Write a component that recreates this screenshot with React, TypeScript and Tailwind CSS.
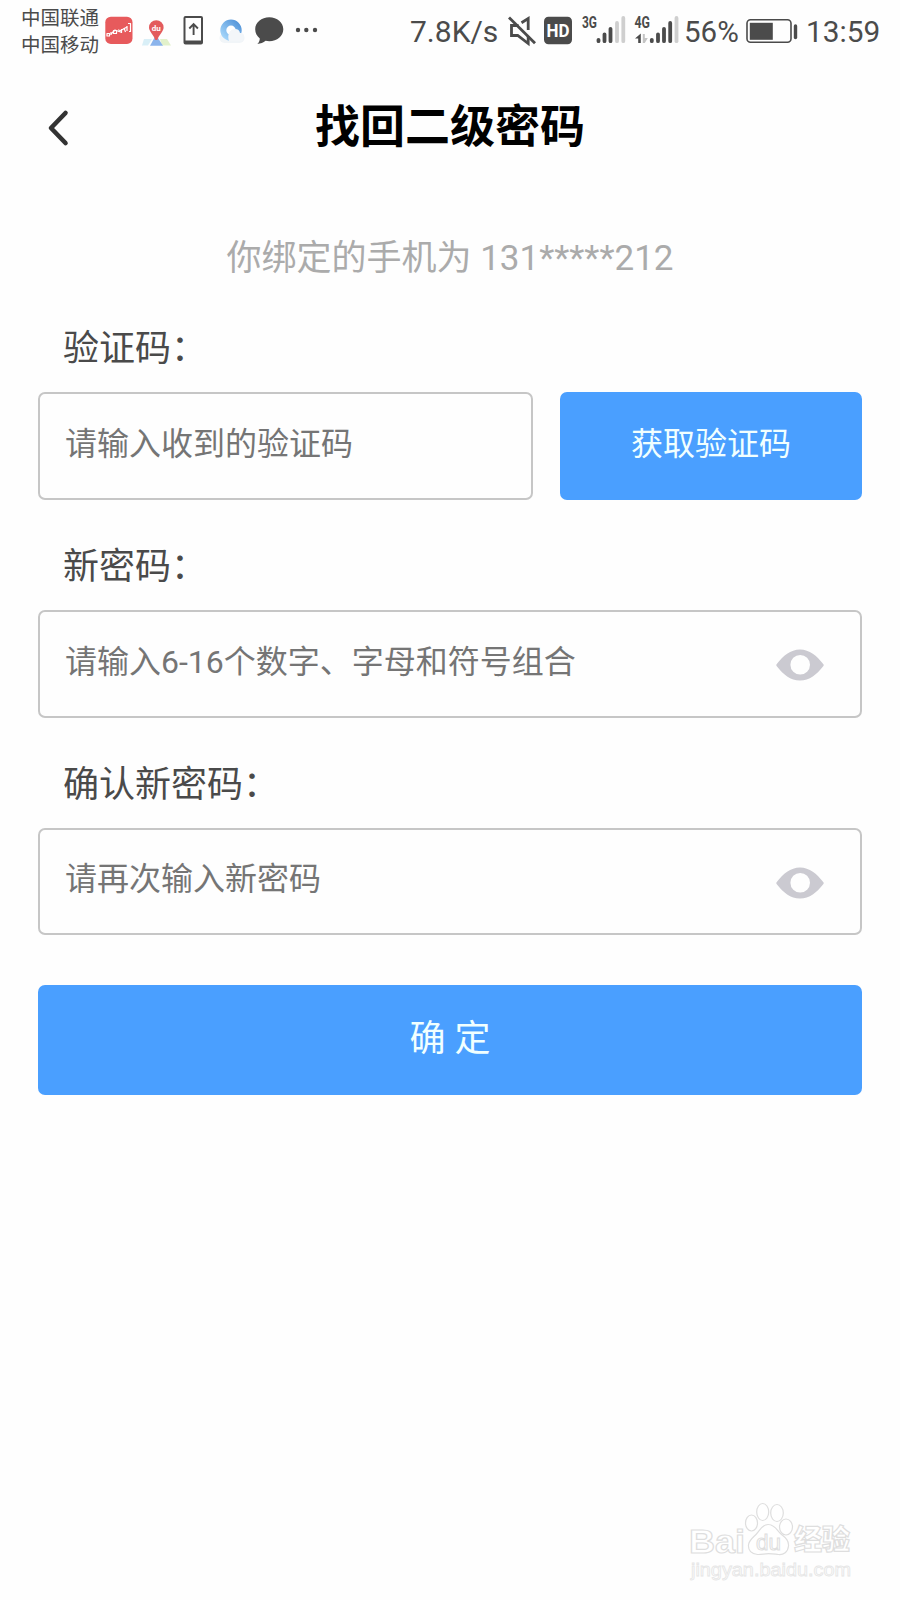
const INK = '#4b4b4b';

function AppIcons() {
  return (
    <div className="flex h-[62px] items-start">
      {/* red chart app */}
      <svg className="ml-[5px] h-[62px] w-[28px]" viewBox="105 0 28 62">
        <rect x="105.3" y="16.7" width="27.2" height="27.2" rx="5.5" fill="#e75a5c" />
        <g fill="none" stroke="#fff" strokeWidth="1.2" strokeLinejoin="round">
          <path d="M107 33.500h2.500v2.500H107zM111 35v-3M113.500 30.500h3v3h-3zM118.500 29.500l2 3M121.500 29v4M124 28l1.500 4M127 26v5M128 23.500h2.500v8H129" />
          <path d="M111 34l4-4 4 1.500 8-4.500" />
        </g>
      </svg>
      {/* map app */}
      <svg className="ml-[8px] h-[62px] w-[30px]" viewBox="141 0 30 62">
        <path d="M144 39h8l-4 6.500h-6z" fill="#d9eff7" />
        <path d="M160 39h7l4 6.500h-9z" fill="#e2f1cb" />
        <path d="M156 35l7 10.700h-13z" fill="#8bb4ec" />
        <path d="M156.300 20.200a7.300 7.300 0 0 1 7.300 7.300c0 4-4.500 7-6.300 12.500h-2c-1.800-5.500-6.300-8.500-6.300-12.500a7.300 7.300 0 0 1 7.300-7.300z" fill="#e35b5d" />
        <text x="156.300" y="30.500" textAnchor="middle" fontSize="8" fontWeight="700" fill="#fff" className="font-[Roboto,sans-serif]">du</text>
      </svg>
      {/* phone transfer */}
      <svg className="ml-[12px] h-[62px] w-[20px]" viewBox="183 0 20 62">
        <path fillRule="evenodd" fill={INK} d="M185.500 16h15.500a2 2 0 0 1 2 2v24.500a2 2 0 0 1-2 2h-15.500a2 2 0 0 1-2-2V18a2 2 0 0 1 2-2zM185.500 18v22.500h15.500v-22.500z" />
        <path d="M193.600 35V24.500M189.300 28.500l4.300-4.300 4.300 4.300" fill="none" stroke={INK} strokeWidth="1.900" />
      </svg>
      {/* browser */}
      <svg className="ml-[15px] h-[62px] w-[28px]" viewBox="218 0 28 62">
        <defs>
          <linearGradient id="ring" x1="0" y1="1" x2="1" y2="0">
            <stop offset="0" stopColor="#a5d6fa" />
            <stop offset="1" stopColor="#5596da" />
          </linearGradient>
        </defs>
        <rect x="219.500" y="33" width="25" height="10" rx="5" fill="#f1f5f8" />
        <circle cx="231" cy="30.300" r="7.700" fill="#fff" stroke="url(#ring)" strokeWidth="6" />
        <path d="M229 41c-2-5 0-12 6-12 3 0 4.500 1.500 5 4 3.500 0 4.500 2 4 4.500s-2 3.500-4 3.500z" fill="#f3f6f9" />
      </svg>
      {/* chat */}
      <svg className="ml-[9px] h-[62px] w-[29px]" viewBox="255 0 29 62">
        <path fill={INK} d="M269.300 17.200c7.800 0 14 5.300 14 12s-6.200 12-14 12c-1.300 0-2.500-.1-3.700-.4-2.200 1.700-5 2.900-8.300 3.200 1.600-1.500 2.500-3.400 2.500-5.600-2.800-2.200-4.600-5.500-4.600-9.200 0-6.700 6.300-12 14.100-12z" />
      </svg>
      {/* more */}
      <svg className="ml-[11px] h-[62px] w-[24px]" viewBox="295 0 24 62">
        <g fill={INK}>
          <circle cx="298" cy="30" r="2.200" />
          <circle cx="306.300" cy="30" r="2.200" />
          <circle cx="315" cy="30" r="2.200" />
        </g>
      </svg>
    </div>
  );
}

function StatusBar() {
  return (
    <div className="flex h-[62px] items-start whitespace-nowrap text-[#4b4b4b]">
      <div className="ml-[21px] mt-[5px] w-[79px] shrink-0 text-[19.5px] leading-[27px]">
        <div>中国联通</div>
        <div>中国移动</div>
      </div>
      <AppIcons />
      <span className="ml-[91px] w-[98px] text-[30px] leading-[64px]">7.8K/s</span>
      {/* muted speaker */}
      <svg className="h-[62px] w-[28px]" viewBox="508 0 28 62">
        <g fill="none" stroke={INK} strokeWidth="2.800">
          <path d="M518.500 25.500h-7v10h6.200l10.500 8V36" />
          <path d="M521.500 22.800l6.700-4.300v11.500" />
          <path d="M509 17.500l26 25.800" />
        </g>
      </svg>
      {/* HD badge */}
      <svg className="ml-[8px] h-[62px] w-[28px]" viewBox="544 0 28 62">
        <rect x="544" y="16.800" width="28" height="27.400" rx="4.500" fill={INK} />
        <text x="558" y="37" textAnchor="middle" textLength="23" lengthAdjust="spacingAndGlyphs" fontSize="18.500" fontWeight="700" fill="#fff" className="font-[Roboto,sans-serif]">HD</text>
      </svg>
      {/* 3G signal */}
      <svg className="ml-[9px] h-[62px] w-[46px]" viewBox="581 0 46 62">
        <text x="582" y="28.200" textLength="15" lengthAdjust="spacingAndGlyphs" fontSize="16.500" fontWeight="700" fill={INK} className="font-[Roboto,sans-serif]">3G</text>
        <g strokeWidth="3.800" strokeLinecap="round" stroke={INK}>
          <path d="M598.500 39.800v1.400M604.500 34.300v6.900M610.500 28.800v12.400" />
          <path d="M617 23v18.200M623.300 18v23.200" stroke="#cfcfcf" />
        </g>
      </svg>
      {/* 4G signal */}
      <svg className="ml-[7px] h-[62px] w-[46px]" viewBox="634 0 46 62">
        <text x="634.500" y="28.200" textLength="15.500" lengthAdjust="spacingAndGlyphs" fontSize="16.500" fontWeight="700" fill={INK} className="font-[Roboto,sans-serif]">4G</text>
        <path d="M640.800 33.500V43h-2.600v-4.500H635z" fill={INK} />
        <path d="M642.800 34h2v4l3 0-3 5h-2z" fill="#c4c4c4" />
        <g strokeWidth="3.800" strokeLinecap="round" stroke={INK}>
          <path d="M651.800 39.800v1.400M658 34.300v6.900M664 28.800v12.400M670.200 23v18.200" />
          <path d="M676.500 18v23.200" stroke="#cfcfcf" />
        </g>
      </svg>
      <span className="ml-[4px] w-[62px] text-[29.5px] leading-[64px]">56%</span>
      {/* battery */}
      <svg className="h-[62px] w-[52px]" viewBox="746 0 52 62">
        <rect x="747" y="19.700" width="44" height="22.600" rx="3.500" fill="none" stroke={INK} strokeWidth="1.600" />
        <rect x="749.800" y="22.800" width="23" height="17" fill={INK} />
        <path d="M795.500 26v11.500" stroke={INK} strokeWidth="3.400" strokeLinecap="round" />
      </svg>
      <span className="ml-[8px] text-[29.8px] leading-[64px]">13:59</span>
    </div>
  );
}

function Eye() {
  return (
    <svg className="mt-[3px] h-[32px] w-[48px]" viewBox="0 0 48 32">
      <path
        fill="#cbcad1"
        fillRule="evenodd"
        d="M1 14.800C7 7 14.500.5 24 .5S41 7 47 14.800c1 1.100 1 1.500 0 2.600C41 25 33.500 31.500 24 31.500S7 25 1 17.400c-1-1.100-1-1.500 0-2.600zM24.200 6a9.800 9.800 0 1 0 0 19.600 9.800 9.800 0 0 0 0-19.600z"
      />
    </svg>
  );
}

function FieldLabel({ children }: { children: string }) {
  return (
    <label className="flex h-[80px] pl-[25px] pt-[10px] text-[36px] leading-[54px] text-[#4a4a4a]">
      {children}
      <span>：</span>
    </label>
  );
}

function PasswordField({ label, placeholder }: { label: string; placeholder: string }) {
  return (
    <div className="pt-[30px]">
      <FieldLabel>{label}</FieldLabel>
      <div className="flex h-[107.5px] items-center justify-between rounded-[7px] border-2 border-[#c6c6c6] pl-[25px] pr-[36px]">
        <span className="-mt-[4px] text-[32px] leading-[48px] text-[#757575]">{placeholder}</span>
        <Eye />
      </div>
    </div>
  );
}

function Watermark() {
  return (
    <svg className="absolute left-[686px] top-[1498px] h-[88px] w-[170px]" viewBox="686 1498 170 88">
      <g fill="#fff" stroke="#dedede" strokeWidth="1.200">
        <text x="689" y="1553" textLength="56" lengthAdjust="spacingAndGlyphs" fontSize="34" fontWeight="700" className="font-['Liberation_Sans',sans-serif]">Bai</text>
        <ellipse cx="751.500" cy="1523" rx="6" ry="8" />
        <ellipse cx="762.700" cy="1512" rx="6" ry="8.500" />
        <ellipse cx="777" cy="1513" rx="6.300" ry="8.500" />
        <ellipse cx="786" cy="1527" rx="6.500" ry="8" />
        <path d="M768 1524.500c7 0 9 6 13 9.500 5 4 8 7 7.500 12-.5 6-5 9-10 8.500-4-.4-6-.8-10-.8s-7 1-11 .8c-6-.3-9.500-4-9-9.500.4-4.500 4-7 7.500-10.500 4-4 6-10 12-10z" />
        <text x="756" y="1550" textLength="25" lengthAdjust="spacingAndGlyphs" fontSize="22" className="font-['Liberation_Sans',sans-serif]" strokeWidth="1">du</text>
        <text x="794" y="1550" textLength="56" lengthAdjust="spacingAndGlyphs" fontSize="28" fontWeight="900" className="font-['Noto_Sans_CJK_SC',sans-serif]">经验</text>
      </g>
      <text x="691" y="1576" textLength="160" lengthAdjust="spacingAndGlyphs" fontSize="17.500" fill="#fff" stroke="#e6e6e6" strokeWidth="0.800" className="font-['Liberation_Sans',sans-serif]">jingyan.baidu.com</text>
    </svg>
  );
}

export default function App() {
  return (
    <div className="relative h-[1600px] w-[900px] overflow-hidden bg-[#fefefe] font-[Roboto,'Noto_Sans_CJK_SC',sans-serif]">
      <StatusBar />
      <header className="grid h-[130px] grid-cols-[100px_1fr_100px] items-start">
        <svg className="ml-[46px] mt-[47px] h-[38px] w-[24px]" viewBox="0 0 24 38">
          <path d="M19.500 4L5 19l14.500 15" fill="none" stroke="#333" strokeWidth="4.600" strokeLinecap="round" strokeLinejoin="round" />
        </svg>
        <h1 className="mt-[33px] text-center text-[45px] font-bold leading-[66px] text-black">找回二级密码</h1>
      </header>
      <main className="px-[38px] pt-[41px]">
        <p className="h-[79px] text-center text-[35px] leading-[52px] text-[#ababab]">你绑定的手机为 131*****212</p>
        <FieldLabel>验证码</FieldLabel>
        <div className="flex justify-between">
          <div className="flex h-[108px] w-[494.5px] items-center rounded-[7px] border-2 border-[#c6c6c6] pl-[25px]">
            <span className="-mt-[4px] text-[32px] leading-[48px] text-[#757575]">请输入收到的验证码</span>
          </div>
          <button className="h-[108px] w-[302px] rounded-[7px] bg-[#4a9fff] pb-[4px] text-[32px] leading-[48px] text-[#f1ffff]">获取验证码</button>
        </div>
        <PasswordField label="新密码" placeholder="请输入6-16个数字、字母和符号组合" />
        <PasswordField label="确认新密码" placeholder="请再次输入新密码" />
        <button className="mt-[50px] h-[110px] w-full rounded-[7px] bg-[#4a9fff] pb-[3px] text-[36px] leading-[54px] text-[#f1ffff]">确 定</button>
      </main>
      <Watermark />
    </div>
  );
}
